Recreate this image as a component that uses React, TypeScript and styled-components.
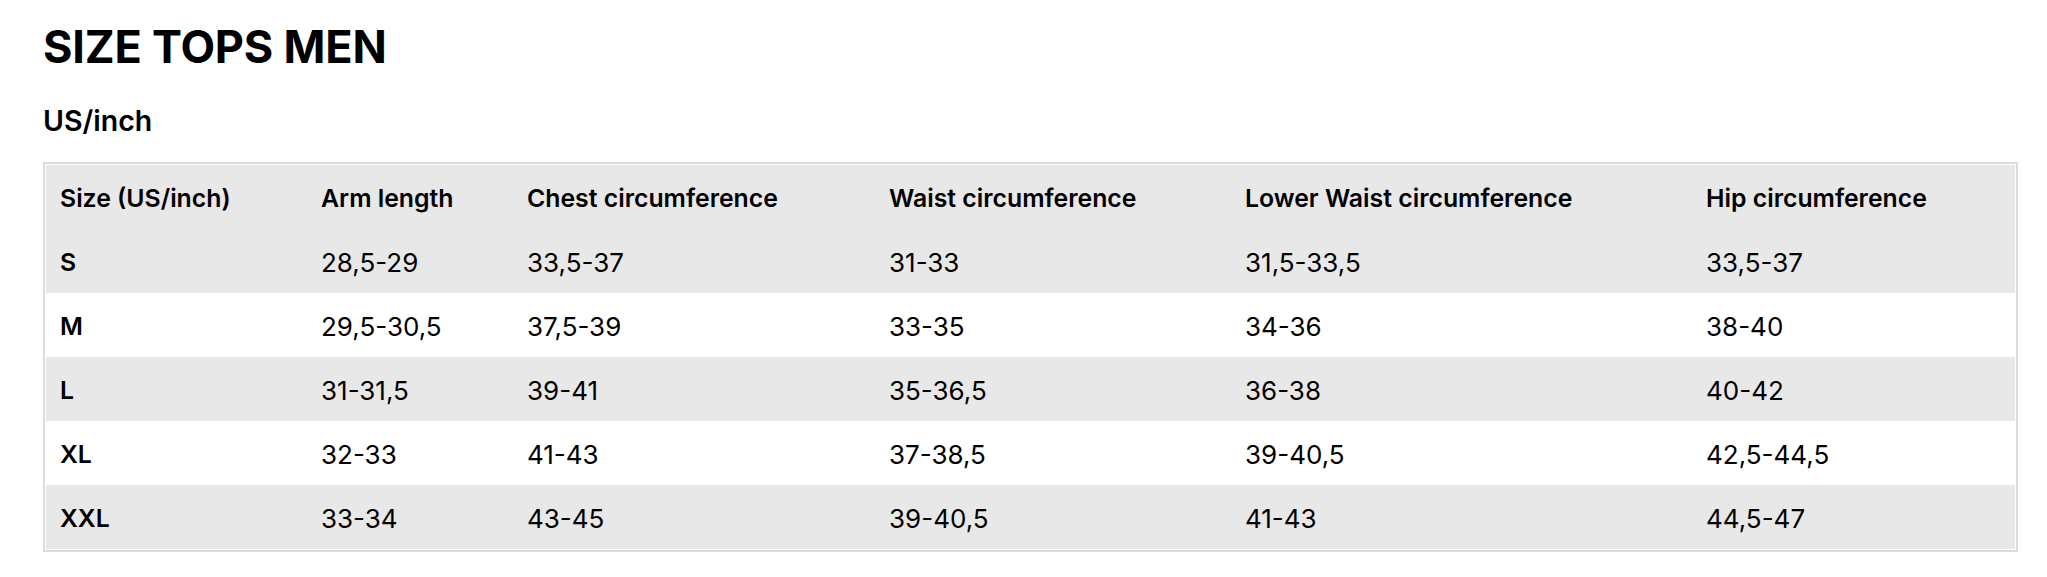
import styled, { createGlobalStyle } from "styled-components";

const GlobalStyle = createGlobalStyle`
  body {
    margin: 0;
    background: #fff;
    color: #000;
    font-family: Inter, "Noto Sans", "Liberation Sans", sans-serif;
  }
`;

const Page = styled.div`
  padding: 20px 29px 0 43px;
`;

const Title = styled.h1`
  margin: 0;
  font-size: 45px;
  line-height: 54px;
  font-weight: 700;
  letter-spacing: -0.2px;
`;

const Subtitle = styled.h2`
  margin: 30px 0 24px;
  font-size: 28.5px;
  line-height: 34px;
  font-weight: 600;
`;

const Frame = styled.div`
  border: 2px solid #dcdcdc;
  padding: 1px;
`;

const Table = styled.table`
  width: 100%;
  table-layout: fixed;
  border-collapse: collapse;
  font-size: 26px;

  tbody tr:nth-child(odd) {
    background: #e8e8e8;
  }
`;

const Col = styled.col<{ $w: number }>`
  width: ${(p) => p.$w}px;
`;

const HeadRow = styled.tr`
  background: #e8e8e8;
`;

const HeadCell = styled.th`
  height: 62px;
  padding: 2px 14px 0;
  text-align: left;
  font-size: 24.8px;
  font-weight: 600;
  white-space: nowrap;
`;

const Cell = styled.td<{ $strong?: boolean }>`
  height: 62px;
  padding: 2px 14px 0;
  font-size: ${(p) => (p.$strong ? "24.8px" : "26px")};
  font-weight: ${(p) => (p.$strong ? 600 : 400)};
  white-space: nowrap;
`;

const columns = [
  { label: "Size (US/inch)", width: 261 },
  { label: "Arm length", width: 206 },
  { label: "Chest circumference", width: 362 },
  { label: "Waist circumference", width: 356 },
  { label: "Lower Waist circumference", width: 461 },
  { label: "Hip circumference", width: 323 },
];

const rows = [
  ["S", "28,5-29", "33,5-37", "31-33", "31,5-33,5", "33,5-37"],
  ["M", "29,5-30,5", "37,5-39", "33-35", "34-36", "38-40"],
  ["L", "31-31,5", "39-41", "35-36,5", "36-38", "40-42"],
  ["XL", "32-33", "41-43", "37-38,5", "39-40,5", "42,5-44,5"],
  ["XXL", "33-34", "43-45", "39-40,5", "41-43", "44,5-47"],
];

const App = () => {
  return (
    <Page>
      <GlobalStyle />
      <Title>SIZE TOPS MEN</Title>
      <Subtitle>US/inch</Subtitle>
      <Frame>
        <Table>
          <colgroup>
            {columns.map((c) => (
              <Col key={c.label} $w={c.width} />
            ))}
          </colgroup>
          <thead>
            <HeadRow>
              {columns.map((c) => (
                <HeadCell key={c.label}>{c.label}</HeadCell>
              ))}
            </HeadRow>
          </thead>
          <tbody>
            {rows.map((row) => (
              <tr key={row[0]}>
                {row.map((value, i) => (
                  <Cell key={i} $strong={i === 0}>
                    {value}
                  </Cell>
                ))}
              </tr>
            ))}
          </tbody>
        </Table>
      </Frame>
    </Page>
  );
};

export default App;
